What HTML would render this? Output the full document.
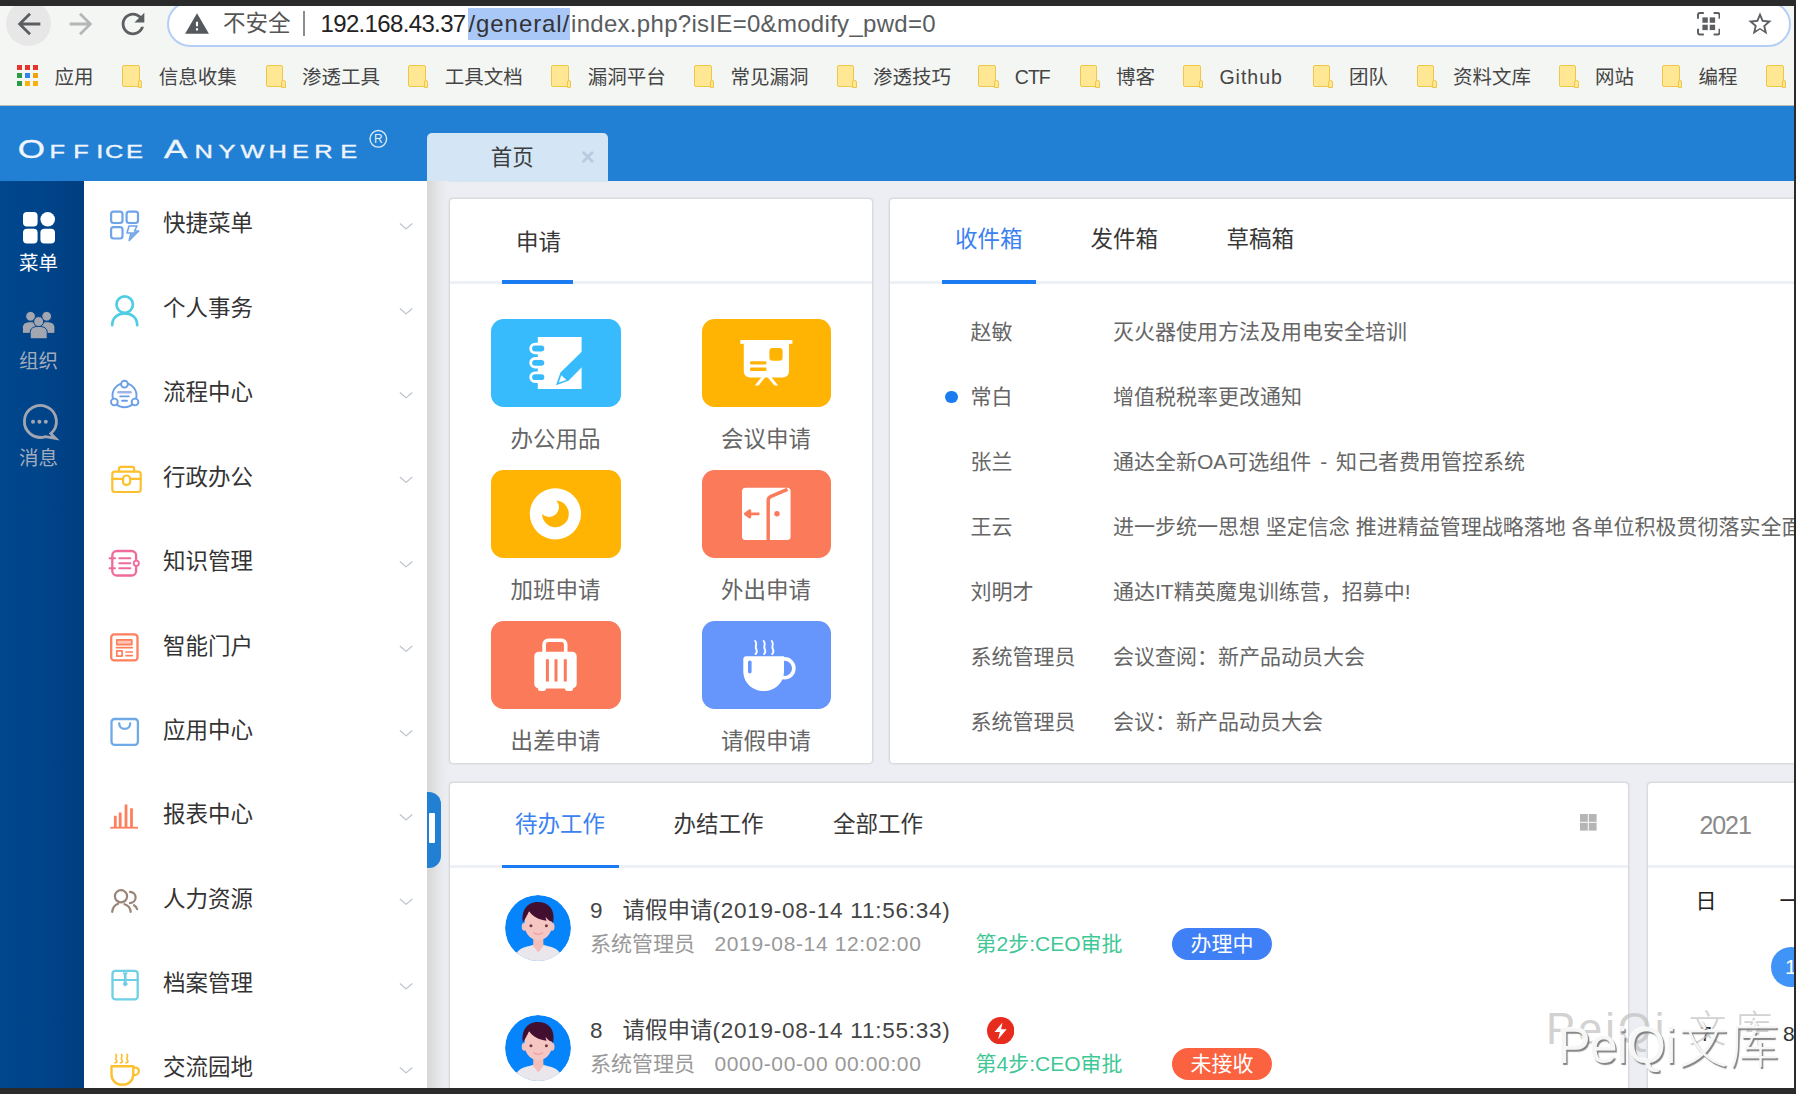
<!DOCTYPE html>
<html lang="zh-CN">
<head>
<meta charset="utf-8">
<title>Office Anywhere</title>
<style>
*{box-sizing:border-box;margin:0;padding:0}
html,body{width:1796px;height:1094px;overflow:hidden;background:#2b2b2b}
body{font-family:"Liberation Sans","Noto Sans CJK SC",sans-serif;color:#333;position:relative}
.abs{position:absolute}
#frame{position:absolute;left:0;top:0;width:1794px;height:1088px;overflow:hidden;background:#eceef4}
#topbar{position:absolute;left:0;top:0;width:1796px;height:5.500px;background:#2b2b2b;z-index:50}
/* ---------- browser chrome ---------- */
#chrome{position:absolute;left:0;top:0;width:1794px;height:106px;background:#f4f6f4;border-bottom:1px solid #b9bbb9}
#backc{position:absolute;left:6px;top:1px;width:45px;height:45px;border-radius:50%;background:#e6e7e6}
#omni{position:absolute;left:167px;top:1px;width:1624px;height:46px;border:2.500px solid #b5cef6;border-radius:23px;background:#fff}
.url{position:absolute;top:5px;height:38px;line-height:38px;font-size:24px;color:#222;white-space:nowrap}
.bm{position:absolute;top:64px;height:26px;line-height:26px;font-size:19.500px;color:#454545;white-space:nowrap}
.fold{position:absolute;top:64.500px;width:17.600px;height:22.500px;background:#ffe793;border:1.800px solid #efc648;border-radius:2px}
.fold:after{content:"";box-sizing:border-box;position:absolute;right:-3.600px;bottom:-1.800px;width:4.600px;height:7.600px;border:1.500px solid #efc648;border-radius:2.300px 2.300px 0 0;background:#ffe793}
/* ---------- app ---------- */
#hdr{left:0;top:106px;width:1794px;height:75px;background:#2180d3}
#logo{left:19px;top:27px;color:#fff;white-space:nowrap;letter-spacing:4.6px;font-size:19px;line-height:36px;transform-origin:0 50%}
#logo b{font-weight:normal;font-size:27px}
#tab{left:427.300px;top:27px;width:180.300px;height:49px;background:#d4e6f6;border-radius:5px 5px 0 0}
#side{left:0;top:181px;width:83.500px;height:907px;background:linear-gradient(90deg,#00478e 0,#004489 50%,#003e80 100%)}
#menu{left:84px;top:181px;width:343px;height:907px;background:#fff}
.mt{position:absolute;left:163px;height:40px;line-height:40px;font-size:22.5px;color:#333;white-space:nowrap}
.sd{position:absolute;left:0;width:77px;text-align:center;font-size:19.5px;line-height:26px;color:#a3acbd}
#shadow{left:427px;top:181px;width:22px;height:907px;background:linear-gradient(90deg,#d7d7d7 0,#dcdcdc 20%,#e6e6e7 50%,#e9ebf0 75%,#eceef4 100%)}
#handle{left:427.400px;top:792px;width:13.400px;height:76px;background:#2180d3;border-radius:0 12px 12px 0}
#handle i{position:absolute;left:2px;top:21px;width:6px;height:30px;background:#fff;border-radius:1px}
.panel{position:absolute;background:#fff;border:1px solid #d9dade;border-radius:4px;box-shadow:0 0 2px rgba(0,0,0,.13)}
.ph{position:absolute;left:0;right:0;top:0;height:85px;border-bottom:3px solid #edf0f6}
.pt{position:absolute;height:84px;line-height:84px;font-size:22.500px;color:#383838;white-space:nowrap}
.pt.on{color:#3b82f0}
.ul{position:absolute;height:3.500px;background:#1a7cf0}
.tile{position:absolute;width:129.500px;height:87.500px;border-radius:12.500px}
.tl{position:absolute;width:211px;text-align:center;font-size:22.5px;line-height:30px;color:#666}
.ml{position:absolute;font-size:21px;line-height:30px;color:#666;white-space:nowrap}
.wt{position:absolute;font-size:22.500px;line-height:30px;color:#444;white-space:nowrap}
.wt b{font-weight:normal;letter-spacing:.75px}
.ws{position:absolute;font-size:21px;line-height:30px;color:#999;white-space:nowrap}
.ws b{font-weight:normal;letter-spacing:.63px}
.bd{position:absolute;left:1172px;width:100px;height:32px;border-radius:16px;color:#fff;font-size:21px;line-height:32px;text-align:center}
</style>
</head>
<body>
<div id="topbar"></div>
<div id="frame">
<!-- CHROME -->
<div id="chrome">
<i id="backc"></i>
<svg class="abs" style="left:11.7px;top:7px" width="34" height="34" viewBox="0 0 24 24"><path fill="#5c5f62" d="M20 11H7.83l5.59-5.59L12 4l-8 8 8 8 1.41-1.41L7.83 13H20v-2z"/></svg>
<svg class="abs" style="left:63.5px;top:7px" width="34" height="34" viewBox="0 0 24 24"><path fill="#b4b6b8" d="M12 4l-1.41 1.41L16.17 11H4v2h12.17l-5.58 5.59L12 20l8-8z"/></svg>
<svg class="abs" style="left:115.5px;top:7px" width="34" height="34" viewBox="0 0 24 24"><path fill="#5c5f62" d="M17.65 6.35C16.2 4.9 14.21 4 12 4c-4.42 0-7.99 3.58-7.99 8s3.57 8 7.99 8c3.73 0 6.84-2.55 7.73-6h-2.08c-.82 2.33-3.04 4-5.65 4-3.31 0-6-2.69-6-6s2.69-6 6-6c1.66 0 3.14.69 4.22 1.78L13 11h7V4l-2.35 2.35z"/></svg>
<div id="omni"></div>
<svg class="abs" style="left:184px;top:10.5px" width="26" height="26" viewBox="0 0 24 24"><path fill="#55585c" d="M1 21h22L12 2 1 21zm12-3h-2v-2h2v2zm0-4h-2v-4h2v4z"/></svg>
<span class="url" style="left:223px;font-size:22.5px;color:#555">不安全</span>
<i class="abs" style="left:303px;top:11px;width:1.5px;height:25px;background:#8a8d90"></i>
<i class="abs" style="left:467.5px;top:8px;width:102.5px;height:32px;background:#a9c8f7"></i>
<span class="url" style="left:320.5px;font-size:24px;letter-spacing:-0.65px;color:#222">192.168.43.37</span>
<span class="url" style="left:468.5px;font-size:24px;letter-spacing:0.92px;color:#333">/general/</span>
<span class="url" style="left:571px;font-size:24px;letter-spacing:0.3px;color:#5a5d60">index.php?isIE=0&amp;modify_pwd=0</span>
<svg class="abs" style="left:1696.5px;top:12px" width="23.5" height="23.5" viewBox="0 0 24 24" fill="none" stroke="#5c5f62" stroke-width="2"><path d="M1 7V3a2 2 0 0 1 2-2h4M17 1h4a2 2 0 0 1 2 2v4M23 17v4a2 2 0 0 1-2 2h-4M7 23H3a2 2 0 0 1-2-2v-4"/><g fill="#5c5f62" stroke="none"><rect x="5.5" y="5.5" width="5.5" height="5.5"/><rect x="13" y="5.5" width="5.5" height="5.5"/><rect x="5.5" y="13" width="5.5" height="5.5"/><rect x="13" y="13" width="5.5" height="5.5"/></g></svg>
<svg class="abs" style="left:1746px;top:10px" width="28" height="28" viewBox="0 0 24 24"><path fill="#5c5f62" d="M22 9.24l-7.19-.62L12 2 9.19 8.63 2 9.24l5.46 4.73L5.82 21 12 16.77 18.18 21l-1.63-7.03L22 9.24zM12 15.4l-3.76 2.27 1-4.28-3.32-2.88 4.38-.38L12 6.1l1.71 4.04 4.38.38-3.32 2.88 1 4.28L12 15.4z"/></svg>
<i style="position:absolute;left:17.0px;top:64.5px;width:5px;height:5px;background:#e8352c"></i><i style="position:absolute;left:25.2px;top:64.5px;width:5px;height:5px;background:#e8352c"></i><i style="position:absolute;left:33.4px;top:64.5px;width:5px;height:5px;background:#e8352c"></i><i style="position:absolute;left:17.0px;top:72.7px;width:5px;height:5px;background:#2d9a47"></i><i style="position:absolute;left:25.2px;top:72.7px;width:5px;height:5px;background:#2f85ec"></i><i style="position:absolute;left:33.4px;top:72.7px;width:5px;height:5px;background:#f0a30a"></i><i style="position:absolute;left:17.0px;top:80.9px;width:5px;height:5px;background:#2d9a47"></i><i style="position:absolute;left:25.2px;top:80.9px;width:5px;height:5px;background:#f7b20b"></i><i style="position:absolute;left:33.4px;top:80.9px;width:5px;height:5px;background:#f7b20b"></i>
<span class="bm" style="left:54.5px">应用</span>
<i class="fold" style="left:122.3px"></i><span class="bm" style="left:158.7px">信息收集</span>
<i class="fold" style="left:265.6px"></i><span class="bm" style="left:302.0px">渗透工具</span>
<i class="fold" style="left:408.3px"></i><span class="bm" style="left:444.7px">工具文档</span>
<i class="fold" style="left:551.3px"></i><span class="bm" style="left:587.7px">漏洞平台</span>
<i class="fold" style="left:694px"></i><span class="bm" style="left:730.4px">常见漏洞</span>
<i class="fold" style="left:836.7px"></i><span class="bm" style="left:873.1px">渗透技巧</span>
<i class="fold" style="left:978.4px"></i><span class="bm" style="left:1014.8px;letter-spacing:-1px">CTF</span>
<i class="fold" style="left:1079.6px"></i><span class="bm" style="left:1116.0px">博客</span>
<i class="fold" style="left:1183px"></i><span class="bm" style="left:1219.4px;letter-spacing:1px">Github</span>
<i class="fold" style="left:1312.5px"></i><span class="bm" style="left:1348.9px">团队</span>
<i class="fold" style="left:1416.7px"></i><span class="bm" style="left:1453.1px">资料文库</span>
<i class="fold" style="left:1558.5px"></i><span class="bm" style="left:1594.9px">网站</span>
<i class="fold" style="left:1662px"></i><span class="bm" style="left:1698.4px">编程</span>
<i class="fold" style="left:1766px"></i>
</div>
<!-- APP -->
<div id="hdr" class="abs">
<svg class="abs" style="left:0;top:0" width="427" height="75" viewBox="0 0 427 75" font-family="'Liberation Sans',sans-serif" fill="#eef5fc" stroke="#eef5fc" stroke-width="0.350">
<g transform="scale(1.4,1)"><text x="12.6 35.4 52.4 68.8 75.0 90.0" y="52.3" font-size="18.2"><tspan font-size="25">O</tspan>FFICE</text>
<text x="117.1 138.9 156.1 171.8 191.8 208.6 224.4 243.1" y="52.3" font-size="18.2"><tspan font-size="25">A</tspan>NYWHERE</text></g>
<circle cx="378.300" cy="32.800" r="8.300" fill="none" stroke-width="1.400" stroke="#dbe9f7"/>
<text x="378.300" y="37.100" font-size="12" text-anchor="middle" stroke="none" fill="#e4eefa">R</text>
</svg>
<div id="tab" class="abs"><span class="abs" style="left:63.5px;top:12px;font-size:21.500px;line-height:26px;color:#3c3c3c">首页</span><span class="abs" style="left:153.500px;top:10.500px;font-size:24px;line-height:26px;font-weight:bold;color:#b9cade">×</span></div>
</div>
<div id="side" class="abs"></div>
<div id="menu" class="abs"></div>
<div id="shadow" class="abs"></div>
<div id="handle" class="abs"><i></i></div>
<span class="sd" style="top:250px;color:#fff">菜单</span>
<span class="sd" style="top:347.500px">组织</span>
<span class="sd" style="top:444.500px">消息</span>
<span class="mt" style="top:204.2px">快捷菜单</span>
<span class="mt" style="top:289.2px">个人事务</span>
<span class="mt" style="top:373.2px">流程中心</span>
<span class="mt" style="top:457.7px">行政办公</span>
<span class="mt" style="top:542.2px">知识管理</span>
<span class="mt" style="top:626.7px">智能门户</span>
<span class="mt" style="top:711.2px">应用中心</span>
<span class="mt" style="top:795.2px">报表中心</span>
<span class="mt" style="top:879.7px">人力资源</span>
<span class="mt" style="top:964.2px">档案管理</span>
<span class="mt" style="top:1048.2px">交流园地</span>
<svg class="abs" style="left:0;top:0" width="450" height="1088" viewBox="0 0 450 1088" fill="none" stroke-linecap="round" stroke-linejoin="round">
<!-- sidebar icons -->
<g fill="#fff"><rect x="23" y="212" width="14.6" height="14.6" rx="4"/><circle cx="47.7" cy="219.3" r="7.3"/><rect x="23" y="228.8" width="14.6" height="14.6" rx="4"/><rect x="40.4" y="228.8" width="14.6" height="14.6" rx="4"/></g>
<g fill="#a2a6b1" stroke="#004289" stroke-width="1"><circle cx="30.6" cy="316.3" r="4.9"/><path d="M22.4 333v-5.5c0-3.5 2.6-5.8 8.2-5.8s8.2 2.3 8.2 5.8v5.5z"/><circle cx="46.7" cy="316.3" r="4.9"/><path d="M38.5 333v-5.5c0-3.5 2.6-5.8 8.2-5.8s8.2 2.3 8.2 5.8v5.5z"/><circle cx="38.7" cy="321.6" r="5"/><path d="M30.2 338.6v-6.2c0-3.8 2.8-6 8.5-6s8.5 2.200 8.500 6v6.200z"/></g>
<g stroke="#a2a6b1" stroke-width="2.8"><path d="M50.800 433.600A16 16 0 1 0 45.500 436.600L55.500 438.300z" stroke-linejoin="miter"/></g>
<g fill="#a2a6b1"><circle cx="33" cy="421.8" r="2"/><circle cx="39.400" cy="421.800" r="2"/><circle cx="45.800" cy="421.800" r="2"/></g>
<!-- chevrons -->
<g stroke="#bcc3cd" stroke-width="1.250"><path d="M400.2 223.8l5.9 5.1 5.9-5.1"/><path d="M400.2 308.8l5.9 5.1 5.9-5.1"/><path d="M400.2 392.8l5.9 5.1 5.9-5.1"/><path d="M400.2 477.3l5.9 5.1 5.9-5.1"/><path d="M400.2 561.8l5.9 5.1 5.9-5.1"/><path d="M400.2 646.3l5.9 5.1 5.9-5.1"/><path d="M400.2 730.8l5.9 5.1 5.9-5.1"/><path d="M400.2 814.8l5.9 5.1 5.9-5.1"/><path d="M400.2 899.3l5.9 5.1 5.9-5.1"/><path d="M400.2 983.8l5.9 5.1 5.9-5.1"/><path d="M400.2 1067.8l5.9 5.1 5.9-5.1"/></g>
<!-- 1 quick menu -->
<g stroke="#6fa4e8" stroke-width="2.200"><rect x="111.100" y="211.600" width="11.400" height="11.400" rx="2.500"/><rect x="126.600" y="211.600" width="11.400" height="11.400" rx="2.500"/><rect x="111.100" y="227.100" width="11.400" height="11.400" rx="2.500"/><path d="M129 226h8l-2.500 5h4.200l-9.500 9.500 1.800-7.500h-4z" fill="#fff" stroke-width="1.600"/><path d="M131.200 232.600l7-1.400-9 9z" fill="#7fabea" stroke="none"/></g>
<!-- 2 person -->
<g stroke="#4fcde2" stroke-width="2.700"><circle cx="124.700" cy="304.600" r="8.200"/><path d="M112.200 325.200c0-7.500 5.500-11.800 12.500-11.800s12.500 4.300 12.500 11.800"/></g>
<!-- 3 flow -->
<g stroke="#6a9fe8" stroke-width="1.900"><circle cx="124.500" cy="395.300" r="12" /><g fill="#fff"><circle cx="124.500" cy="384.200" r="3.400"/><circle cx="114.400" cy="402" r="3.400"/><circle cx="135" cy="402" r="3.400"/></g><path d="M118.500 392.200h12" stroke-width="2.600" stroke="#9fb3ec"/><path d="M120.200 396.400h8.600M122 400.800h5"/></g>
<!-- 4 briefcase -->
<g stroke="#fcc02e" stroke-width="2.200"><rect x="112.300" y="471.700" width="28.400" height="20.300" rx="2.500"/><path d="M119 471.500v-2.600c0-1.300.8-2 2-2h11.200c1.300 0 2 .7 2 2v2.600M112.300 478.900h10.500M130.400 478.900h10.300"/><rect x="123" y="475.500" width="7.200" height="9.400" rx="3.400"/></g>
<!-- 5 notebook -->
<g stroke="#f06b9b" stroke-width="2.300"><rect x="112.300" y="551" width="23.800" height="24.500" rx="4.500"/><path d="M109.500 558.300h5.500M109.500 568.300h5.500M119.300 558.300h11M119.300 563.300h11M119.300 568.300h11" stroke-width="2"/><circle cx="136.300" cy="563.300" r="2.600" fill="#fff" stroke-width="1.800"/></g>
<!-- 6 portal -->
<g stroke="#ff7f5c" stroke-width="2.300"><rect x="111.200" y="634.400" width="26.300" height="26" rx="3"/><rect x="116.800" y="639.800" width="15" height="4.800" fill="#ffc4b3" stroke-width="1.700"/><path d="M116.500 647.600h15.800M126 652h6.300M126 655.600h6.300" stroke-width="1.700"/><rect x="116.800" y="650.800" width="5.300" height="5.300" stroke-width="1.700"/></g>
<!-- 7 bag -->
<g stroke="#6faae6" stroke-width="2.300"><rect x="111.500" y="719" width="26.400" height="25.800" rx="3"/><path d="M119.200 723.500c0 3.200 2.400 5.400 5.500 5.400s5.500-2.200 5.500-5.400"/></g>
<!-- 8 chart -->
<g stroke="#ff7f5c" stroke-width="2.800" stroke-linecap="butt"><path d="M115.300 827v-11.200M120.200 827v-14.600M126 827v-22.600M131.500 827v-18.800"/><path d="M110.300 827.700h27.700" stroke-width="1.800"/></g>
<!-- 9 HR -->
<g stroke="#9a8478" stroke-width="2.200"><circle cx="121" cy="896.300" r="6.100"/><path d="M112.200 911.800c.5-4.300 3-7 6-8M124.500 904.200c3.500 1 5.800 3.800 6.200 7.600M130 891.800c3.300.2 5.600 2.700 5.600 5.700s-2.300 5.300-5.600 5.600M134 905.200c1.700 1 2.700 2.300 3.200 4"/></g>
<!-- 10 archive -->
<g stroke="#6dd0e4" stroke-width="2.300"><rect x="112.500" y="970.800" width="25.200" height="28.600" rx="3"/><path d="M112.500 980h25.200" stroke-width="2"/><path d="M125.200 973.500v10" stroke-width="2.600"/><circle cx="125.200" cy="984" r="1.800" fill="#6dd0e4" stroke-width="1"/><path d="M123.500 973l1.700 2 1.700-2" stroke-width="1.500"/></g>
<!-- 11 coffee -->
<g stroke="#fcc02e" stroke-width="2.400"><path d="M111.500 1066.200h21.800v8c0 6.500-4.600 10.600-10.900 10.600s-10.900-4.100-10.900-10.600z"/><path d="M133.500 1067.300c3.200 0 5.400 1.500 5.400 3.900s-2.500 4-5.800 4" stroke-width="2.200"/><path d="M116 1054.500c2 1.800-1.500 3.500.3 5.500s-.5 2.500-1.300 2.800M121.500 1054.500c2 1.800-1.500 3.500.3 5.500s-.5 2.500-1.300 2.800M127 1054.500c2 1.800-1.500 3.500.3 5.500s-.5 2.500-1.300 2.800" stroke-width="1.700"/></g>
</svg>
<svg width="0" height="0" style="position:absolute"><defs><clipPath id="avc"><circle cx="32.700" cy="32.700" r="32.700"/></clipPath>
<g id="av" clip-path="url(#avc)"><circle cx="32.700" cy="32.700" r="32.700" fill="#0584fb"/>
<path d="M9 66c0-9 6-14 15-15.500l5-1.500h8l5 1.500c9 1.500 15 6.500 15 15.500z" fill="#e9e6ec"/>
<path d="M28 42h10v8.500l-5 6.500-5-6.500z" fill="#f3bdb8"/>
<ellipse cx="19.200" cy="31.500" rx="2.600" ry="4" fill="#f4c3c0"/><ellipse cx="46.500" cy="31.500" rx="2.600" ry="4" fill="#f4c3c0"/>
<path d="M19.500 24c0-9 6-14 13.300-14s13.700 5 13.700 14v6c0 9-7 15-13.500 15s-13.500-6-13.500-15z" fill="#f5c6c2"/>
<path d="M17.800 27c-2-11 4-20 14.500-20 11 0 17.500 7 15.500 20l-2.500-1c-1.500-.5-4-2.500-5-4.500 0 1.500.5 3 1 4-8-1-14-4.500-17.500-9.500-1.500 3.500-3.500 7-6 11z" fill="#420f30"/>
<circle cx="25.700" cy="30.500" r="1.500" fill="#6b3a4a"/><circle cx="41" cy="30.500" r="1.500" fill="#6b3a4a"/>
<path d="M28.500 37.500c2.500 2 6.500 2 9 0" fill="none" stroke="#ee9ea4" stroke-width="1.300" stroke-linecap="round"/></g></defs></svg>
<div id="main">
<div class="panel" style="left:449px;top:197.500px;width:423.500px;height:566px"><div class="ph"></div></div>
<div class="panel" style="left:888.500px;top:197.500px;width:920px;height:566px"><div class="ph"></div></div>
<div class="panel" style="left:449px;top:782px;width:1180px;height:320px"><div class="ph"></div></div>
<div class="panel" style="left:1647px;top:782px;width:160px;height:320px"><div class="ph"></div></div>
<span class="pt" style="left:516px;top:200.500px">申请</span><i class="ul" style="left:502px;top:280px;width:71px"></i>
<span class="pt on" style="left:955px;top:198px">收件箱</span><span class="pt" style="left:1090.500px;top:198px">发件箱</span><span class="pt" style="left:1226.500px;top:198px">草稿箱</span><i class="ul" style="left:941.500px;top:280px;width:94px"></i>
<span class="pt on" style="left:515px;top:782.500px">待办工作</span><span class="pt" style="left:673.500px;top:782.500px">办结工作</span><span class="pt" style="left:833px;top:782.500px">全部工作</span><i class="ul" style="left:502px;top:864.500px;width:117px"></i>
<i class="tile" style="left:491px;top:319px;background:#38bbfc"></i><span class="tl" style="left:450.0px;top:425.0px">办公用品</span>
<i class="tile" style="left:701.5px;top:319px;background:#ffb403"></i><span class="tl" style="left:660.5px;top:425.0px">会议申请</span>
<i class="tile" style="left:491px;top:470px;background:#ffb403"></i><span class="tl" style="left:450.0px;top:576.0px">加班申请</span>
<i class="tile" style="left:701.5px;top:470px;background:#fb7a5a"></i><span class="tl" style="left:660.5px;top:576.0px">外出申请</span>
<i class="tile" style="left:491px;top:621px;background:#fb7a5a"></i><span class="tl" style="left:450.0px;top:727.0px">出差申请</span>
<i class="tile" style="left:701.5px;top:621px;background:#6696fb"></i><span class="tl" style="left:660.5px;top:727.0px">请假申请</span>
<span class="ml" style="left:970.5px;top:316.8px">赵敏</span><span class="ml" style="left:1113px;top:316.8px">灭火器使用方法及用电安全培训</span>
<span class="ml" style="left:970.5px;top:381.8px">常白</span><span class="ml" style="left:1113px;top:381.8px">增值税税率更改通知</span>
<span class="ml" style="left:970.5px;top:446.8px">张兰</span><span class="ml" style="left:1113px;top:446.8px;word-spacing:3px">通达全新OA可选组件 - 知己者费用管控系统</span>
<span class="ml" style="left:970.5px;top:511.8px">王云</span><span class="ml" style="left:1113px;top:511.8px">进一步统一思想 坚定信念 推进精益管理战略落地 各单位积极贯彻落实全面预算管理工作</span>
<span class="ml" style="left:970.5px;top:576.8px">刘明才</span><span class="ml" style="left:1113px;top:576.8px">通达IT精英魔鬼训练营，招募中!</span>
<span class="ml" style="left:970.5px;top:641.8px">系统管理员</span><span class="ml" style="left:1113px;top:641.8px">会议查阅：新产品动员大会</span>
<span class="ml" style="left:970.5px;top:706.8px">系统管理员</span><span class="ml" style="left:1113px;top:706.8px">会议：新产品动员大会</span>
<svg class="abs" style="left:449px;top:300px" width="430" height="420" viewBox="449 300 430 420">
<!-- notebook -->
<g><rect x="537.800" y="337" width="43.800" height="52" fill="#fff"/>
<g fill="#38bbfc" stroke="#fff" stroke-width="2.800"><rect x="530.700" y="344.200" width="15" height="8.600" rx="4.300"/><rect x="530.700" y="358.500" width="15" height="8.600" rx="4.300"/><rect x="530.700" y="372.900" width="15" height="8.600" rx="4.300"/></g>
<path d="M583 350.500L560.500 372.500 556 385.200 568.500 380.800 583 366z" fill="#38bbfc"/><path d="M561.300 375.300l5.200 4.800-7.700 2.500z" fill="#fff"/></g>
<!-- board -->
<g fill="#fff"><rect x="740.300" y="340" width="52.100" height="3.800"/><path d="M743.800 343h45.200v28.400a6 6 0 0 1-6 6h-33.200a6 6 0 0 1-6-6z"/><path d="M762 376.500h3.800l-7.200 9h-3.800zM767 376.500h3.800l7.400 9h-3.800z"/></g>
<g fill="#ffb403"><rect x="769.400" y="348" width="13.200" height="12.800" rx="3.200"/><rect x="750" y="361.300" width="16.400" height="3.300" rx="1"/><rect x="750" y="367.500" width="16.400" height="3.500" rx="1"/></g>
<!-- moon -->
<circle cx="555.400" cy="513.800" r="25.600" fill="#fff"/><path d="M556.300 500.600a13.300 13.300 0 1 1-14.100 13.300 8.500 8.500 0 1 0 14.100-13.300z" fill="#ffb403"/>
<!-- door -->
<rect x="742" y="487.700" width="48.600" height="52.300" rx="3.500" fill="#fff"/>
<path d="M768.200 540v-39.500c0-2.200.8-3.300 2.800-4.100l16.500-7" fill="none" stroke="#fb7a5a" stroke-width="3.400"/>
<path d="M747.500 513.800h12M749.800 510.600l-4.500 3.200 4.500 3.200z" stroke="#fb7a5a" stroke-width="2.800" fill="#fb7a5a" stroke-linejoin="round"/><circle cx="777" cy="513.800" r="2.700" fill="#fb7a5a"/>
<!-- luggage -->
<g fill="#fff"><rect x="534.300" y="651.700" width="42.400" height="36.700" rx="4.500"/><rect x="538" y="684" width="8" height="7" rx="2.500"/><rect x="565" y="684" width="8" height="7" rx="2.500"/></g>
<path d="M544.100 653v-8.700a4 4 0 0 1 4-4h13.600a4 4 0 0 1 4 4v8.700" fill="none" stroke="#fff" stroke-width="3.600"/>
<path d="M547.400 659.300v22.200M556 659.300v22.200M565.300 659.300v22.200" stroke="#fb7a5a" stroke-width="3" />
<!-- coffee -->
<path d="M743.300 659.200a3 3 0 0 1 3-3h37.700v14.800c0 12-9 20-20.300 20s-20.400-8-20.400-20z" fill="#fff"/>
<circle cx="784.500" cy="668.300" r="9.400" fill="none" stroke="#fff" stroke-width="3.600"/>
<path d="M749.800 662.300v9.500" stroke="#6696fb" stroke-width="3.600" stroke-linecap="round"/>
<g fill="none" stroke="#fff" stroke-width="1.900" stroke-linecap="round"><path d="M755.200 641c2.500 3.300-.5 5 1 8s.3 4-.6 5M763.700 641c2.500 3.300-.5 5 1 8s.3 4-.6 5M771.800 641c2.500 3.300-.5 5 1 8s.3 4-.6 5"/></g>
</svg>
<i class="abs" style="left:945px;top:390.500px;width:12.600px;height:12.600px;border-radius:50%;background:#1a7cf0"></i>
<svg class="abs" style="left:505px;top:894.700px" width="66" height="66" viewBox="0 0 65.400 65.400"><use href="#av"/></svg>
<svg class="abs" style="left:505px;top:1015px" width="66" height="66" viewBox="0 0 65.400 65.400"><use href="#av"/></svg>
<span class="wt" style="left:590px;top:896px">9</span><span class="wt" style="left:622.500px;top:896px">请假申请<b>(2019-08-14 11:56:34)</b></span>
<span class="ws" style="left:590px;top:929px">系统管理员</span><span class="ws" style="left:714.500px;top:929px"><b>2019-08-14 12:02:00</b></span><span class="ws" style="left:975.500px;top:929px;color:#3fc795">第2步:CEO审批</span>
<span class="bd" style="top:927.500px;background:#4080f7">办理中</span>
<span class="wt" style="left:590px;top:1016px">8</span><span class="wt" style="left:622.500px;top:1016px">请假申请<b>(2019-08-14 11:55:33)</b></span>
<span class="ws" style="left:590px;top:1049px">系统管理员</span><span class="ws" style="left:714.500px;top:1049px"><b>0000-00-00 00:00:00</b></span><span class="ws" style="left:975.500px;top:1049px;color:#3fc795">第4步:CEO审批</span>
<span class="bd" style="top:1047.500px;background:#fb6340">未接收</span>
<svg class="abs" style="left:986.500px;top:1016.500px" width="27.400" height="27.400" viewBox="0 0 27.400 27.400"><circle cx="13.700" cy="13.700" r="13.700" fill="#e72c1d"/><path d="M15.500 5.500l-8 9.500h5.400l-1.800 7.200 8.600-10h-5.600z" fill="#fff"/></svg>
<svg class="abs" style="left:1580px;top:814px" width="17" height="17" viewBox="0 0 17 17" fill="#b5b5b5"><rect x="0" y="0" width="7.800" height="7.800"/><rect x="8.800" y="0" width="7.800" height="7.800"/><rect x="0" y="8.800" width="7.800" height="7.800"/><rect x="8.800" y="8.800" width="7.800" height="7.800"/></svg>
<span class="abs" style="left:1699.500px;top:808px;font-size:25px;line-height:34px;letter-spacing:-1.100px;color:#8a8a8a">2021</span>
<span class="abs" style="left:1695.500px;top:886px;font-size:21px;line-height:30px;color:#222">日</span>
<span class="abs" style="left:1779.500px;top:886px;font-size:21px;line-height:30px;color:#222">一</span>
<span class="abs" style="left:1700px;top:1019px;font-size:21px;line-height:30px;color:#333">7</span>
<span class="abs" style="left:1783px;top:1019px;font-size:21px;line-height:30px;color:#333">8</span>
<i class="abs" style="left:1771px;top:947px;width:40px;height:40px;border-radius:50%;background:#4094f8"></i>
<span class="abs" style="left:1785px;top:952px;font-size:21px;line-height:30px;color:#fff">1</span>
<span class="abs" style="left:1546px;top:998.500px;font-size:43.500px;line-height:60px;white-space:nowrap;color:rgba(195,195,195,.75);letter-spacing:3px">PeiQi<span style="font-size:38px;letter-spacing:8px;margin-left:21px;font-weight:300;position:relative;top:-2px">文库</span></span>
<span class="abs" style="left:1557.500px;top:1015.500px;font-size:49.500px;line-height:60px;white-space:nowrap;color:#f6f6f6;text-shadow:1.500px 1.500px 1px rgba(110,110,110,.85),-1px -1px 0 rgba(255,255,255,.9);letter-spacing:-.600px">PeiQi<span style="letter-spacing:1.500px;margin-left:3px;font-weight:300">文库</span></span>
</div>
</div>
<div class="abs" style="left:0;top:1088px;width:1796px;height:6px;background:#2b2b2b"></div>
</body>
</html>
